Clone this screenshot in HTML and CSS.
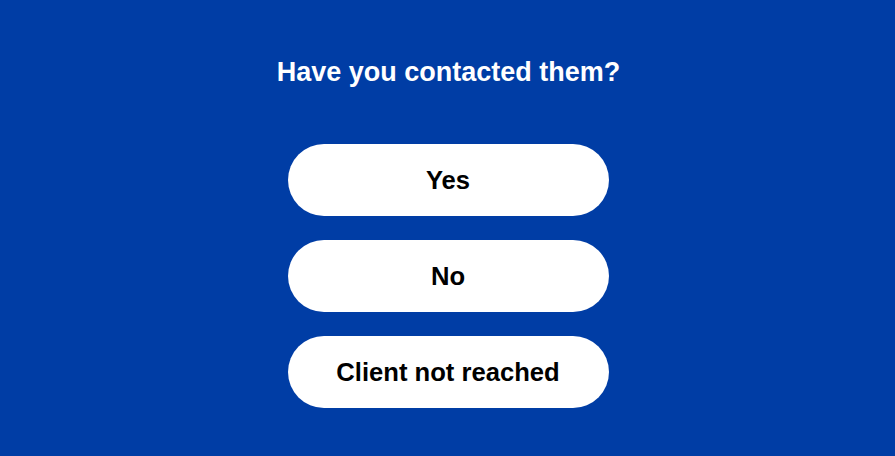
FILE: index.html
```html
<!DOCTYPE html>
<html lang="en">
<head>
<meta charset="utf-8">
<title>Have you contacted them?</title>
<link rel="stylesheet" href="styles.css">
</head>
<body>
<main class="page">
  <h1 class="question">Have you contacted them?</h1>
  <div class="options">
    <button class="option">Yes</button>
    <button class="option">No</button>
    <button class="option">Client not reached</button>
  </div>
</main>
</body>
</html>
```

FILE: styles.css
```css
html, body {
  margin: 0;
  padding: 0;
  height: 100%;
}
body {
  background: #003da5;
  font-family: "Liberation Sans", Arial, sans-serif;
}
.page {
  display: flex;
  flex-direction: column;
  align-items: center;
  padding-top: 57px;
}
.question {
  margin: 0 0 57px 2px;
  font-size: 27px;
  line-height: 30px;
  font-weight: 700;
  color: #ffffff;
}
.options {
  display: flex;
  flex-direction: column;
  gap: 24px;
  margin-left: 1px;
}
.option {
  width: 321px;
  height: 72px;
  border: none;
  border-radius: 36px;
  background: #ffffff;
  color: #000000;
  font-family: "Liberation Sans", Arial, sans-serif;
  font-size: 25.6px;
  font-weight: 700;
  padding: 0;
  cursor: pointer;
}
```
